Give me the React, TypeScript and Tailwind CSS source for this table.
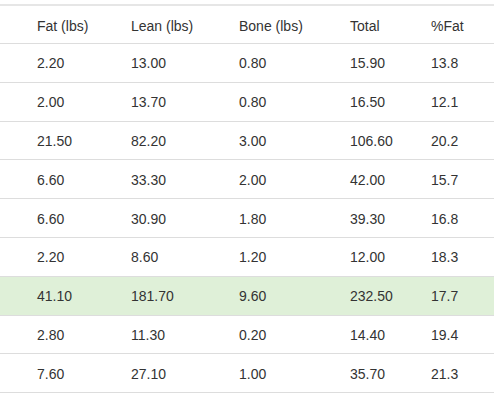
import React from "react";

const rows: { v: string[]; hl?: boolean }[] = [
  { v: ["2.20", "13.00", "0.80", "15.90", "13.8"] },
  { v: ["2.00", "13.70", "0.80", "16.50", "12.1"] },
  { v: ["21.50", "82.20", "3.00", "106.60", "20.2"] },
  { v: ["6.60", "33.30", "2.00", "42.00", "15.7"] },
  { v: ["6.60", "30.90", "1.80", "39.30", "16.8"] },
  { v: ["2.20", "8.60", "1.20", "12.00", "18.3"] },
  { v: ["41.10", "181.70", "9.60", "232.50", "17.7"], hl: true },
  { v: ["2.80", "11.30", "0.20", "14.40", "19.4"] },
  { v: ["7.60", "27.10", "1.00", "35.70", "21.3"] },
];

const headers = ["Fat (lbs)", "Lean (lbs)", "Bone (lbs)", "Total", "%Fat"];

function Cells({ items }: { items: string[] }) {
  return (
    <>
      <div className="w-[37px] shrink-0" />
      <div className="w-[94px] shrink-0">{items[0]}</div>
      <div className="w-[108px] shrink-0">{items[1]}</div>
      <div className="w-[111px] shrink-0">{items[2]}</div>
      <div className="w-[81px] shrink-0">{items[3]}</div>
      <div className="flex-1">{items[4]}</div>
    </>
  );
}

export default function App() {
  return (
    <div
      className="w-[495px] h-[400px] bg-white overflow-hidden text-[14px] leading-[20px] text-[#333]"
      style={{ fontFamily: '"Liberation Sans", Arial, Helvetica, sans-serif' }}
    >
      <div className="w-[494px] pt-[4px]">
        <div className="flex items-center h-[40px] pt-[2px] border-t-2 border-b border-t-[#e6e6e6] border-b-[#ddd]">
          <Cells items={headers} />
        </div>
        {rows.map((r, i) => (
          <div
            key={i}
            className={`flex items-center h-[38.8px] pt-[1px] border-b border-[#ddd] ${r.hl ? "bg-[#dff0d8]" : ""}`}
          >
            <Cells items={r.v} />
          </div>
        ))}
      </div>
    </div>
  );
}
